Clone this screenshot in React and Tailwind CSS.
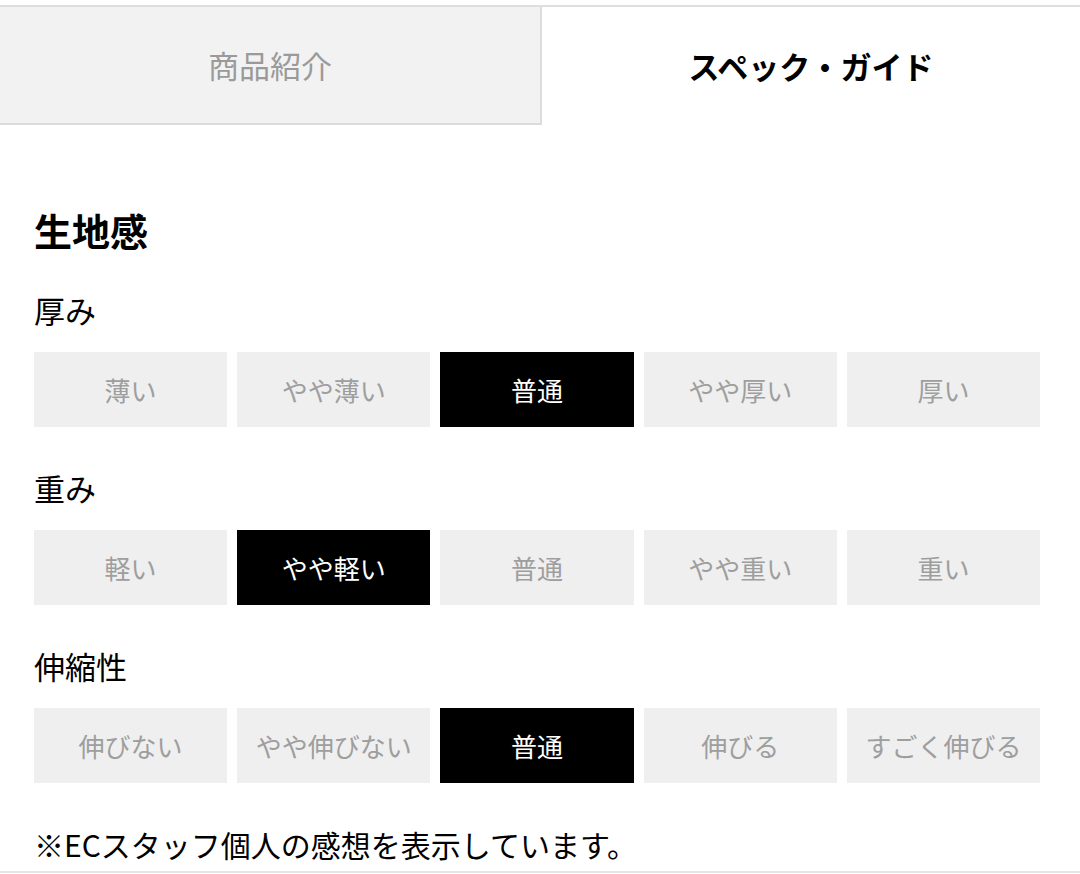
import { useState } from 'react';

const specs = [
  { label: '厚み', options: ['薄い', 'やや薄い', '普通', 'やや厚い', '厚い'], selected: 2 },
  { label: '重み', options: ['軽い', 'やや軽い', '普通', 'やや重い', '重い'], selected: 1 },
  { label: '伸縮性', options: ['伸びない', 'やや伸びない', '普通', '伸びる', 'すごく伸びる'], selected: 2 },
];

function SpecRow({ spec }) {
  return (
    <div className="mt-[34px] [&+&]:mt-[39px]">
      <p className="h-[44px] text-[31px] leading-[44px] text-black">{spec.label}</p>
      <div className="mt-[20px] grid grid-cols-5 gap-[10px]">
        {spec.options.map((opt, i) => (
          <div
            key={opt}
            className={
              i === spec.selected
                ? 'flex h-[75px] items-center justify-center whitespace-nowrap bg-black text-[26px] text-white'
                : 'flex h-[75px] items-center justify-center whitespace-nowrap bg-[#efefef] text-[26px] text-[#9e9e9e]'
            }
          >
            {opt}
          </div>
        ))}
      </div>
    </div>
  );
}

export default function App() {
  const [tab, setTab] = useState('spec');

  return (
    <div
      className="h-[874px] w-[1080px] overflow-hidden bg-white"
      style={{ fontFamily: '"Noto Sans CJK JP", "Noto Sans", sans-serif' }}
    >
      <div className="mt-[5px] flex h-[120px] border-t-2 border-[#dedede]">
        <button
          onClick={() => setTab('intro')}
          className={
            tab === 'intro'
              ? 'flex w-[542px] items-center justify-center text-[31px] font-bold text-black'
              : 'flex w-[542px] items-center justify-center border-b-2 border-r-2 border-[#dcdcdc] bg-[#f2f2f2] text-[31px] text-[#9a9a9a]'
          }
        >
          商品紹介
        </button>
        <button
          onClick={() => setTab('spec')}
          className={
            tab === 'spec'
              ? 'flex flex-1 items-center justify-center text-[31px] font-bold text-black'
              : 'flex flex-1 items-center justify-center border-b-2 border-l-2 border-[#dcdcdc] bg-[#f2f2f2] text-[31px] text-[#9a9a9a]'
          }
        >
          スペック・ガイド
        </button>
      </div>

      <div className="border-b-2 border-[#e4e4e4] pl-[34px] pr-[40px] pt-[81px] pb-[5px]">
        <h2 className="h-[48px] text-[38px] font-bold leading-[48px] text-black">生地感</h2>
        {specs.map((spec) => (
          <SpecRow key={spec.label} spec={spec} />
        ))}
        <p className="mt-[39px] h-[44px] text-[30px] leading-[44px] text-black">
          ※ECスタッフ個人の感想を表示しています。
        </p>
      </div>
    </div>
  );
}
